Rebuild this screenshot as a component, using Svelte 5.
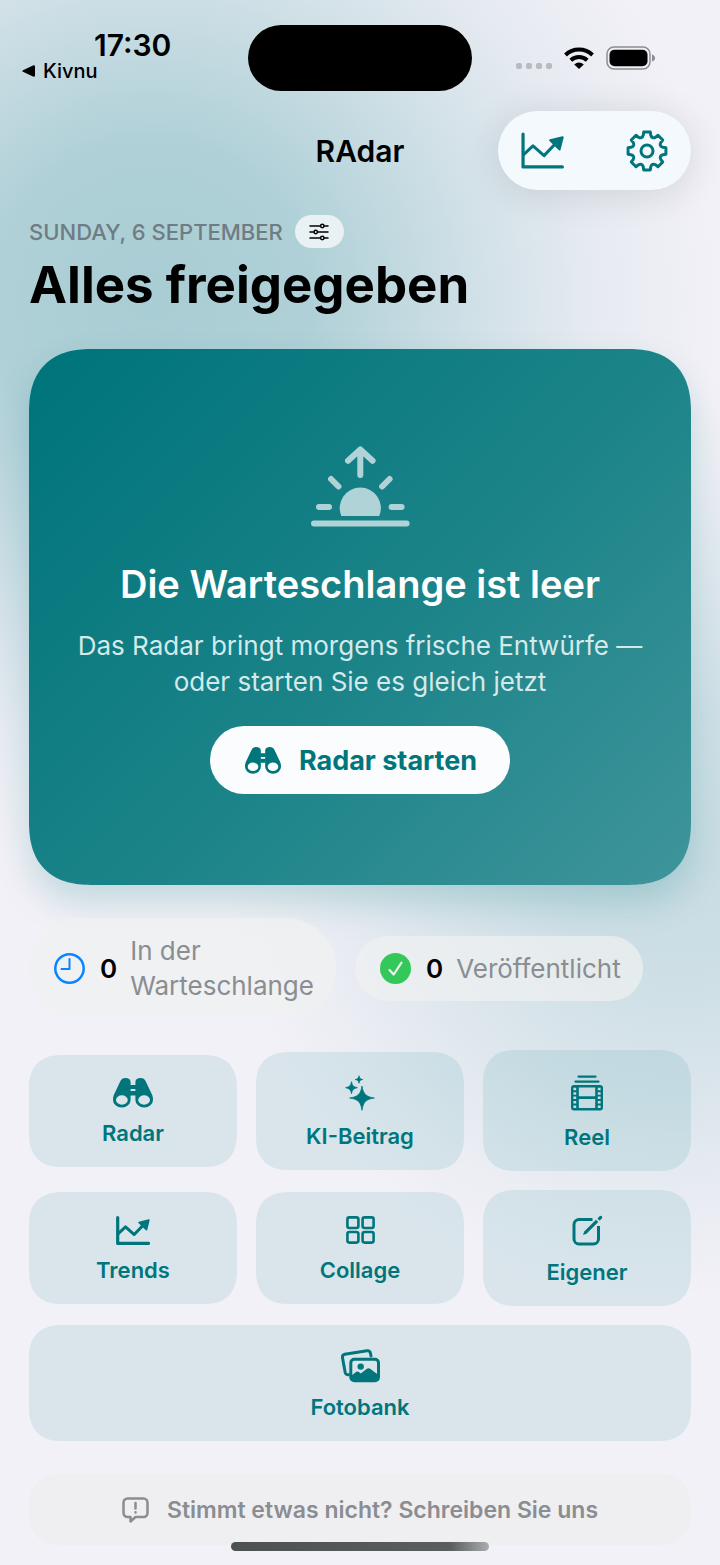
<script>
  const barrel = `<path fill="currentColor" fill-rule="evenodd" d="M7.200 3.400C8.200 1.200 10 0 12.400 0C15.500 0 17.600 1.600 17.600 4V22A8.800 7.600 0 0 1 0 22C0 20 .3 18.600 .8 17ZM3 22a5.900 4.700 0 1 0 11.800 0a5.900 4.700 0 1 0-11.800 0Z"/>`

  const icons = {
    chart: `<path d="M2 2V34H40.400" fill="none" stroke="currentColor" stroke-width="3.200" stroke-linecap="round" stroke-linejoin="round" vector-effect="non-scaling-stroke"/><path d="M2 22.500L11.700 13.500L22.500 23L34 11" fill="none" stroke="currentColor" stroke-width="3" stroke-linejoin="round" vector-effect="non-scaling-stroke"/><path d="M40.700 5L28.500 8L37.700 17Z" fill="currentColor" stroke="currentColor" stroke-width="2" stroke-linejoin="round"/>`,
    // right barrel mirrors the left one
    binoculars: `<g>${barrel}</g><g transform="translate(40 0) scale(-1 1)">${barrel}</g><path fill="currentColor" d="M17 7H23V11H17ZM17 13H23V17.500H17Z"/>`,
    sparkles: `<path fill="currentColor" stroke="currentColor" stroke-width=".8" stroke-linejoin="round" d="M17 11C18.200 19 21 21.800 29.300 23C21 24.200 18.200 27 17 35.300C15.800 27 13 24.200 4.700 23C13 21.800 15.800 19 17 11ZM6.500 6.700C7.100 10.600 8.600 12 12.400 12.700C8.600 13.400 7.100 14.800 6.500 18.700C5.900 14.800 4.400 13.400.6 12.700C4.400 12 5.900 10.600 6.500 6.700ZM14 .8C14.400 3.200 15.300 4.100 17.700 4.500C15.300 4.900 14.400 5.800 14 8.200C13.600 5.800 12.700 4.900 10.300 4.500C12.700 4.100 13.600 3.200 14 .8Z"/>`,
    reel: `<path fill="none" stroke="currentColor" stroke-width="2.300" stroke-linecap="round" d="M7.500 1.600H24.500M4.500 6.600H27.500"/><path fill="currentColor" fill-rule="evenodd" d="M3 10H29a3 3 0 0 1 3 3V32.500a3 3 0 0 1-3 3H3a3 3 0 0 1-3-3V13a3 3 0 0 1 3-3ZM7.800 12.500V21.200H24.200V12.500ZM7.800 24V33H24.200V24ZM2.400 12.800V15.300H5.200V12.800ZM2.400 17.200V19.700H5.200V17.200ZM2.400 21.600V24.100H5.200V21.600ZM2.400 26V28.500H5.200V26ZM2.400 30.400V32.900H5.200V30.400ZM26.800 12.800V15.300H29.600V12.800ZM26.800 17.200V19.700H29.600V17.200ZM26.800 21.600V24.100H29.600V21.600ZM26.800 26V28.500H29.600V26ZM26.800 30.400V32.900H29.600V30.400Z"/>`,
    collage: `<g fill="none" stroke="currentColor" stroke-width="2.600"><rect x="1.400" y="1.400" width="11" height="10.600" rx="2"/><rect x="16.600" y="1.400" width="11" height="10.600" rx="2"/><rect x="1.400" y="16" width="11" height="10.600" rx="2"/><rect x="16.600" y="16" width="11" height="10.600" rx="2"/></g>`,
    compose: `<path d="M20.500 4.500H7a5 5 0 0 0-5 5V24a5 5 0 0 0 5 5H21.500a5 5 0 0 0 5-5V11" fill="none" stroke="currentColor" stroke-width="3"/><path fill="currentColor" d="M11 20L12.200 16.500L24 4.800L26.300 7L14.500 18.700ZM25.400 3.500L27.600 1.300a1.500 1.500 0 0 1 2.200 2.200L27.600 5.700Z"/>`,
    photos: `<g fill="none" stroke="currentColor" stroke-width="3" stroke-linecap="round"><path d="M31 8L30.400 5Q29.800 2.300 27 2.700L4.800 6.200Q2 6.800 2.500 9.800L5.200 24.500Q5.800 27 8.500 26.800"/><rect x="10.800" y="11.300" width="27.700" height="21.500" rx="3.500"/></g><circle cx="20.700" cy="18.600" r="3.200" fill="currentColor"/><path fill="currentColor" d="M11 28L16.300 23.800Q17.400 23 18.500 23.800L20.800 25.600L26.500 21Q28.500 19.500 30.500 21L38.500 27V33H11Z"/>`,
  }

  function gearPath(teeth = 8) {
    const step = 360 / teeth
    const at = (deg, r) => {
      const a = ((deg - 90) * Math.PI) / 180
      return `${(21 + r * Math.cos(a)).toFixed(2)} ${(21 + r * Math.sin(a)).toFixed(2)}`
    }
    let d = ''
    for (let i = 0; i < teeth; i++) {
      const a = i * step
      d += `${i ? 'L' : 'M'}${at(a - 10, 19.2)}L${at(a + 10, 19.2)}L${at(a + 13, 16.4)}Q${at(a + step / 2, 12.8)} ${at(a + step - 13, 16.4)}`
    }
    return d + 'Z'
  }

  const tiles = [
    { label: 'Radar', icon: 'binoculars', box: '0 0 40 30', w: 40, h: 30, size: 's' },
    { label: 'KI-Beitrag', icon: 'sparkles', box: '0 0 30 36', w: 30, h: 36, size: 'l' },
    { label: 'Reel', icon: 'reel', box: '0 0 32 36', w: 32, h: 36, size: 'xl' },
    { label: 'Trends', icon: 'chart', box: '0 0 42 36', w: 34, h: 29, size: 's' },
    { label: 'Collage', icon: 'collage', box: '0 0 29 28', w: 29, h: 28, size: 's' },
    { label: 'Eigener', icon: 'compose', box: '0 0 31 31', w: 31, h: 31, size: 'm' },
    { label: 'Fotobank', icon: 'photos', box: '0 0 40 35', w: 40, h: 35, size: 'm', wide: true },
  ]
</script>

<div class="screen">
  <div class="statusbar">
    <div class="status-left">
      <span class="time">17:30</span>
      <a class="back" href="#kivnu">
        <svg width="13" height="12" viewBox="0 0 13 12"><path d="M1 5.200L11 .4Q13 0 13 1.500V10.500Q13 12 11 11.600L1 6.800Q-.4 6 1 5.200Z" fill="currentColor" /></svg>
        Kivnu
      </a>
    </div>
    <div class="island"></div>
    <div class="status-right">
      <span class="dots"><i></i><i></i><i></i><i></i></span>
      <svg width="30" height="22" viewBox="0 0 30 22">
        <g fill="none" stroke="#000" stroke-width="4">
          <path d="M1.500 8A19.500 19.500 0 0 1 28.500 8" />
          <path d="M6.800 13.300A12 12 0 0 1 23.200 13.300" />
        </g>
        <path d="M15 22L10.200 17.400A7 7 0 0 1 19.800 17.400Z" fill="#000" />
      </svg>
      <svg width="50" height="24" viewBox="0 0 50 24">
        <rect x="1" y="1" width="43" height="22" rx="7" fill="none" stroke="#8b8d92" stroke-width="1.500" />
        <rect x="3.500" y="3.700" width="38" height="16.600" rx="5" fill="#000" />
        <path d="M46 8.500Q49 9.500 49 12T46 15.500Z" fill="#8b8d92" />
      </svg>
    </div>
  </div>

  <nav class="navbar">
    <span class="nav-title">RAdar</span>
    <div class="nav-actions">
      <button aria-label="Trends">
        <svg width="43" height="37" viewBox="0 0 42 36">{@html icons.chart}</svg>
      </button>
      <button aria-label="Einstellungen">
        <svg width="42" height="42" viewBox="0 0 42 42" fill="none" stroke="currentColor" stroke-width="3" stroke-linejoin="round">
          <path d={gearPath()} />
          <circle cx="21" cy="21" r="6" />
        </svg>
      </button>
    </div>
  </nav>

  <header>
    <div class="date-row">
      <span class="date">SUNDAY, 6 SEPTEMBER</span>
      <button class="filter" aria-label="Filter">
        <svg width="20" height="18" viewBox="0 0 20 18" fill="none" stroke="#000" stroke-width="1.500" stroke-linecap="round">
          <path d="M1 3H11M15.500 3H19M1 9H4.500M9 9H19M1 15H11M15.500 15H19" />
          <circle cx="13.300" cy="3" r="1.700" />
          <circle cx="6.700" cy="9" r="1.700" />
          <circle cx="13.300" cy="15" r="1.700" />
        </svg>
      </button>
    </div>
    <h1>Alles freigegeben</h1>
  </header>

  <section class="hero">
    <svg class="sunrise" width="99" height="94" viewBox="0 -6 99 94" fill="none" stroke="currentColor" stroke-width="6" stroke-linecap="round" stroke-linejoin="round">
      <path d="M49.300 4V29M37 14.700L49.300 3.500L61.600 14.700" />
      <path d="M20 33L27.500 40.500M78.600 33L71.100 40.500M8 61H18M80.600 61H90.600M3 77.500H95.600" />
      <path d="M30.300 70A20.600 20.600 0 1 1 68.300 70Z" fill="currentColor" stroke="none" />
    </svg>
    <h2>Die Warteschlange ist leer</h2>
    <p>Das Radar bringt morgens frische Entwürfe — oder starten Sie es gleich jetzt</p>
    <button class="start">
      <svg width="36" height="27" viewBox="0 0 40 30">{@html icons.binoculars}</svg>
      Radar starten
    </button>
  </section>

  <section class="stats">
    <div class="pill">
      <svg width="31" height="31" viewBox="0 0 31 31" fill="none" stroke="#0a84ff" stroke-width="2.500" stroke-linecap="round" stroke-linejoin="round">
        <circle cx="15.500" cy="15.500" r="14.200" />
        <path d="M15.500 6V16H7.500" stroke-width="2" />
      </svg>
      <b>0</b>
      <span>In der Warteschlange</span>
    </div>
    <div class="pill">
      <svg width="31" height="31" viewBox="0 0 31 31">
        <circle cx="15.500" cy="15.500" r="15.500" fill="#34c759" />
        <path d="M9.500 17L13.700 21.500L21.500 9.700" fill="none" stroke="#eef6f1" stroke-width="2.200" stroke-linecap="round" stroke-linejoin="round" />
      </svg>
      <b>0</b>
      <span>Veröffentlicht</span>
    </div>
  </section>

  <section class="tiles">
    {#each tiles as tile}
      <button class="tile" class:wide={tile.wide}>
        <span class="tile-icon {tile.size}">
          <svg width={tile.w} height={tile.h} viewBox={tile.box}>{@html icons[tile.icon]}</svg>
        </span>
        {tile.label}
      </button>
    {/each}
  </section>

  <button class="feedback">
    <svg width="27" height="26" viewBox="0 0 27 26" fill="none" stroke="currentColor" stroke-width="2.500" stroke-linecap="round" stroke-linejoin="round">
      <path d="M5.500 1.500H21.500a4 4 0 0 1 4 4V16a4 4 0 0 1-4 4H13.500L8.500 24.500V20H5.500a4 4 0 0 1-4-4V5.500a4 4 0 0 1 4-4Z" />
      <path d="M13.500 6V11.500M13.500 15.300V15.400" />
    </svg>
    Stimmt etwas nicht? Schreiben Sie uns
  </button>

  <div class="home-indicator"></div>
</div>

<style>
  :global(body) {
    background: #f2f1f7;
  }

  .screen {
    --teal: #00767c;
    box-sizing: border-box;
    padding: 25px 29px 20px;
    font-family: Inter, 'Liberation Sans', sans-serif;
    color: #000;
    background:
      radial-gradient(570px 570px at 21% 300px, rgba(0, 122, 132, 0.3) 0%, rgba(0, 122, 132, 0.28) 27%, rgba(0, 122, 132, 0.2) 44%, rgba(0, 122, 132, 0.13) 59%, rgba(0, 122, 132, 0.05) 78%, transparent 100%),
      radial-gradient(450px 450px at 94% 850px, rgba(0, 122, 132, 0.18) 0%, rgba(0, 122, 132, 0.15) 30%, rgba(0, 122, 132, 0.1) 52%, rgba(0, 122, 132, 0.03) 82%, transparent 100%),
      #f2f1f7;
  }

  button {
    border: none;
    font-family: inherit;
    color: var(--teal);
    cursor: pointer;
  }

  svg {
    flex-shrink: 0;
  }

  .statusbar {
    display: grid;
    grid-template-columns: 1fr 224px 1fr;
    height: 66px;
    margin: 0 -29px;
  }

  .island {
    background: #000;
    border-radius: 33px;
  }

  .status-left {
    display: flex;
    flex-direction: column;
    padding: 3px 0 0 22px;
  }

  .time {
    padding-left: 72px;
    font-size: 30px;
    font-weight: 600;
    line-height: 34px;
  }

  .back {
    display: flex;
    align-items: center;
    gap: 8px;
    font-size: 20px;
    font-weight: 500;
    line-height: 18px;
    color: inherit;
    text-decoration: none;
  }

  .status-right {
    display: flex;
    align-items: center;
    gap: 12px;
    padding-left: 44px;
  }

  .dots {
    display: flex;
    gap: 4px;
    padding-top: 16px;
  }

  .dots i {
    width: 6px;
    height: 6px;
    border-radius: 2px;
    background: #b9bbc0;
  }

  .navbar {
    display: grid;
    grid-template-columns: 1fr auto 1fr;
    align-items: center;
    margin-top: 20px;
  }

  .nav-title {
    grid-column: 2;
    font-size: 30px;
    font-weight: 600;
  }

  .nav-actions {
    display: flex;
    justify-content: space-between;
    justify-self: end;
    box-sizing: border-box;
    width: 193px;
    height: 79px;
    padding: 0 23px;
    border-radius: 40px;
    background: #f4f9fe;
    box-shadow: 0 4px 36px rgba(40, 50, 60, 0.14);
  }

  .nav-actions button {
    display: flex;
    align-items: center;
    padding: 0;
    background: none;
  }

  header {
    margin-top: 25px;
  }

  .date-row {
    display: flex;
    align-items: center;
    gap: 12px;
  }

  .date {
    font-size: 22px;
    font-weight: 500;
    color: #6f7c82;
  }

  .filter {
    display: flex;
    align-items: center;
    justify-content: center;
    width: 49px;
    height: 33px;
    padding: 0;
    border-radius: 17px;
    background: #e9f1f4;
  }

  h1 {
    margin: 6px 0 0;
    font-size: 51px;
    font-weight: 700;
    line-height: 62px;
  }

  .hero {
    display: flex;
    flex-direction: column;
    align-items: center;
    margin-top: 33px;
    padding: 91px 40px;
    border-radius: 54px;
    background: linear-gradient(135deg, #00757b 5%, #1c8489 55%, #3f959b 100%);
    box-shadow: 0 18px 36px rgba(0, 118, 124, 0.2);
    color: #fff;
    text-align: center;
  }

  .sunrise {
    color: #afd3d7;
  }

  h2 {
    margin: 26px 0 0;
    font-size: 38px;
    font-weight: 600;
    line-height: 48px;
  }

  p {
    margin: 20px 0 0;
    font-size: 26px;
    line-height: 36px;
    color: #d5e9ea;
  }

  .start {
    display: flex;
    align-items: center;
    gap: 18px;
    height: 68px;
    margin-top: 26px;
    padding: 0 33px 0 35px;
    border-radius: 34px;
    background: #fafcfd;
    font-size: 27px;
    font-weight: 700;
  }

  .stats {
    display: flex;
    align-items: center;
    gap: 19px;
    margin-top: 33px;
  }

  .pill {
    display: flex;
    align-items: center;
    padding: 15px 22px 15px 25px;
    border-radius: 50px;
    background: rgba(240, 241, 241, 0.7);
    font-size: 26px;
    line-height: 35px;
  }

  .pill b {
    margin: 0 13px 0 15px;
    font-weight: 600;
  }

  .pill span {
    width: min-content;
    color: #8a8d91;
  }

  .tiles {
    display: grid;
    grid-template-columns: repeat(3, 1fr);
    align-items: center;
    gap: 19px;
    margin-top: 32px;
  }

  .tile {
    display: flex;
    flex-direction: column;
    align-items: center;
    gap: 9px;
    padding: 20px 20px 21px;
    border-radius: 30px;
    background: rgba(0, 125, 135, 0.1);
    font-size: 22px;
    font-weight: 600;
    line-height: 26px;
  }

  .tile.wide {
    grid-column: 1 / -1;
  }

  .tile-icon {
    display: flex;
    align-items: center;
    height: 36px;
  }

  .tile-icon.m {
    height: 40px;
  }

  .tile-icon.l {
    height: 42px;
  }

  .tile-icon.xl {
    height: 45px;
  }

  .feedback {
    display: flex;
    align-items: center;
    justify-content: center;
    gap: 18px;
    width: 100%;
    height: 71px;
    margin-top: 33px;
    padding: 0;
    border-radius: 30px;
    background: #efeff1;
    color: #8a8d91;
    font-size: 23px;
    font-weight: 600;
  }

  .home-indicator {
    position: fixed;
    bottom: 14px;
    left: 50%;
    width: 258px;
    height: 9px;
    border-radius: 5px;
    background: linear-gradient(90deg, #4d5152 0%, #5b5e5f 85%, #a9adb0 100%);
    transform: translateX(-50%);
  }

  /* continuous corners where the browser can draw them */
  @supports (corner-shape: squircle) {
    .hero {
      border-radius: 64px;
      corner-shape: superellipse(1.3);
    }

    .tile,
    .feedback {
      border-radius: 34px;
      corner-shape: superellipse(1.3);
    }
  }
</style>
